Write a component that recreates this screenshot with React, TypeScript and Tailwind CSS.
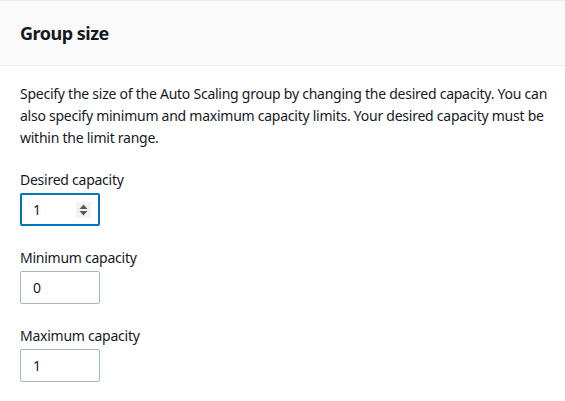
import React from "react";

type CapacityField = {
  label: string;
  value: string;
  focused?: boolean;
};

const FIELDS: CapacityField[] = [
  { label: "Desired capacity", value: "1", focused: true },
  { label: "Minimum capacity", value: "0" },
  { label: "Maximum capacity", value: "1" },
];

function Spinner() {
  return (
    <span className="flex h-4 w-[15px] flex-col items-center justify-center gap-[2px] bg-[#f2f3f3]">
      <svg width="9" height="5" viewBox="0 0 9 5" aria-hidden>
        <path d="M0.5 5 L4.5 0.5 L8.5 5 Z" fill="#545b64" />
      </svg>
      <svg width="9" height="5" viewBox="0 0 9 5" aria-hidden>
        <path d="M0.5 0 L4.5 4.5 L8.5 0 Z" fill="#545b64" />
      </svg>
    </span>
  );
}

function NumberField({ label, value, focused }: CapacityField) {
  return (
    <div className="flex flex-col">
      <label className="text-[14px] leading-[22px] tracking-[-0.25px] text-[#16191f]">{label}</label>
      <div
        className={`mt-[2px] flex h-[33px] w-[80px] items-center justify-between rounded-[2px] bg-white pl-3 pr-2 ${
          focused ? "border-2 border-[#0073bb] pl-[11px] pr-[7px]" : "border border-[#aab7b8]"
        }`}
      >
        <span className="text-[14px] text-[#16191f]">{value}</span>
        {focused ? <Spinner /> : null}
      </div>
    </div>
  );
}

export default function App() {
  return (
    <div
      className="min-h-[401px] w-[565px] bg-white"
      style={{ fontFamily: '"Noto Sans", "Open Sans", Arial, sans-serif' }}
    >
      <header className="flex h-[66px] items-center border-y border-[#eaeded] bg-[#fafafa] px-5">
        <h2 className="text-[18px] font-bold leading-6 tracking-[-0.5px] text-[#16191f]">Group size</h2>
      </header>

      <section className="pl-5 pr-2 pt-[17px]">
        <p className="text-[14px] leading-[22px] tracking-[-0.25px] text-[#16191f]">
          Specify the size of the Auto Scaling group by changing the desired capacity. You can also
          specify minimum and maximum capacity limits. Your desired capacity must be within the limit
          range.
        </p>

        <div className="mt-[20px] flex flex-col gap-[21px]">
          {FIELDS.map((field) => (
            <NumberField key={field.label} {...field} />
          ))}
        </div>
      </section>
    </div>
  );
}
